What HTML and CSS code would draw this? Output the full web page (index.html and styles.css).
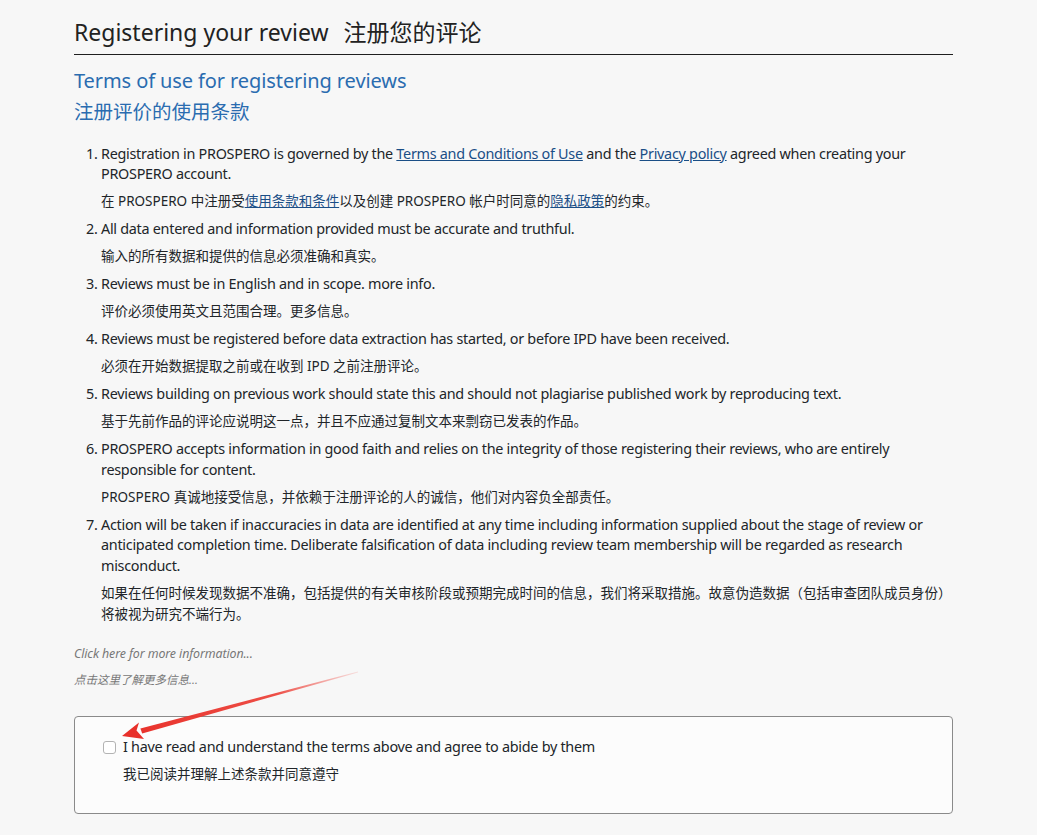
FILE: index.html
```html
<!DOCTYPE html>
<html lang="en">
<head>
<meta charset="utf-8">
<title>Registering your review</title>
<link rel="stylesheet" href="styles.css">
</head>
<body>
<main class="page">
  <h1 class="page-title">Registering your review<span class="title-zh">注册您的评论</span></h1>

  <h2 class="section-title">
    <span class="line">Terms of use for registering reviews</span>
    <span class="line zh-line">注册评价的使用条款</span>
  </h2>

  <ol class="terms">
    <li>
      Registration in PROSPERO is governed by the <a href="#">Terms and Conditions of Use</a> and the <a href="#">Privacy policy</a> agreed when creating your PROSPERO account.
      <p class="zh">在 PROSPERO 中注册受<a href="#">使用条款和条件</a>以及创建 PROSPERO 帐户时同意的<a href="#">隐私政策</a>的约束。</p>
    </li>
    <li>
      All data entered and information provided must be accurate and truthful.
      <p class="zh">输入的所有数据和提供的信息必须准确和真实。</p>
    </li>
    <li>
      Reviews must be in English and in scope. more info.
      <p class="zh">评价必须使用英文且范围合理。更多信息。</p>
    </li>
    <li>
      Reviews must be registered before data extraction has started, or before IPD have been received.
      <p class="zh">必须在开始数据提取之前或在收到 IPD 之前注册评论。</p>
    </li>
    <li>
      Reviews building on previous work should state this and should not plagiarise published work by reproducing text.
      <p class="zh">基于先前作品的评论应说明这一点，并且不应通过复制文本来剽窃已发表的作品。</p>
    </li>
    <li>
      PROSPERO accepts information in good faith and relies on the integrity of those registering their reviews, who are entirely responsible for content.
      <p class="zh">PROSPERO 真诚地接受信息，并依赖于注册评论的人的诚信，他们对内容负全部责任。</p>
    </li>
    <li>
      Action will be taken if inaccuracies in data are identified at any time including information supplied about the stage of review or anticipated completion time. Deliberate falsification of data including review team membership will be regarded as research misconduct.
      <p class="zh">如果在任何时候发现数据不准确，包括提供的有关审核阶段或预期完成时间的信息，我们将采取措施。故意伪造数据（包括审查团队成员身份）将被视为研究不端行为。</p>
    </li>
  </ol>

  <div class="more-info">
    <p>Click here for more information...</p>
    <p class="more-zh">点击这里了解更多信息...</p>
  </div>

  <section class="agree-box">
    <label class="agree-row">
      <input type="checkbox" class="agree-check">
      <span>I have read and understand the terms above and agree to abide by them</span>
    </label>
    <p class="agree-zh">我已阅读并理解上述条款并同意遵守</p>
  </section>
</main>

<svg class="callout-arrow" width="1037" height="835" viewBox="0 0 1037 835" aria-hidden="true">
  <defs>
    <linearGradient id="arrowFade" x1="358" y1="672" x2="124" y2="735" gradientUnits="userSpaceOnUse">
      <stop offset="0" stop-color="#f0524a" stop-opacity="0.15"/>
      <stop offset="0.35" stop-color="#ec3b32" stop-opacity="0.9"/>
      <stop offset="1" stop-color="#e8302a"/>
    </linearGradient>
  </defs>
  <polygon points="358,671.6 358,672.4 142.2,733.4 140.4,728.4" fill="url(#arrowFade)"/>
  <polygon points="122,736 139,722.4 136.5,730.6 144,739" fill="#e8302a"/>
</svg>
</body>
</html>
```

FILE: styles.css
```css
html, body {
  margin: 0;
  padding: 0;
}

body {
  position: relative;
  background: #f7f7f7;
  color: #212529;
  font-family: "Noto Sans", "Noto Sans CJK SC", sans-serif;
  font-size: 14.4px;
  letter-spacing: -0.28px;
}

.page {
  width: 879px;
  margin-left: 74px;
  padding-top: 17px;
}

.page-title {
  margin: 0;
  padding-bottom: 7px;
  border-bottom: 1px solid #1f1f1f;
  font-size: 23px;
  font-weight: 400;
  line-height: 30px;
  letter-spacing: 0;
  color: #222;
}

.title-zh {
  margin-left: 15px;
}

.section-title {
  margin: 10px 0 0;
  font-size: 20px;
  font-weight: 400;
  line-height: 31px;
  letter-spacing: -0.1px;
  color: #2a6cb0;
}

.section-title .line {
  display: block;
}

.section-title .zh-line {
  font-size: 19.5px;
  letter-spacing: 0;
}

.terms {
  margin: 16.5px 0 20.5px;
  padding-left: 27px;
  line-height: 20.5px;
}

.terms a {
  color: #1a4e86;
  text-decoration: underline;
}

.terms .zh {
  margin: 6.5px 0 7px;
  font-size: 13.5px;
  line-height: 21px;
  letter-spacing: 0;
}

.more-info p {
  margin: 0;
  font-size: 12.4px;
  font-style: italic;
  line-height: 18px;
  letter-spacing: -0.1px;
  color: #777;
}

.more-info .more-zh {
  margin-top: 8px;
  font-size: 11.5px;
  letter-spacing: 0;
}

.agree-box {
  margin-top: 27px;
  padding: 20px 27px 28px;
  background: #fcfcfc;
  border: 1px solid #8a8a8a;
  border-radius: 4px;
}

.agree-row {
  display: flex;
  align-items: center;
  line-height: 20px;
}

.agree-check {
  appearance: none;
  -webkit-appearance: none;
  flex: none;
  width: 13px;
  height: 13px;
  margin: 0 7px 0 1px;
  background: #fff;
  border: 1px solid #b3b3b3;
  border-radius: 3px;
}

.agree-zh {
  margin: 7px 0 0 21px;
  font-size: 13.5px;
  line-height: 21px;
  letter-spacing: 0;
}

.callout-arrow {
  position: absolute;
  top: 0;
  left: 0;
  pointer-events: none;
}
```
